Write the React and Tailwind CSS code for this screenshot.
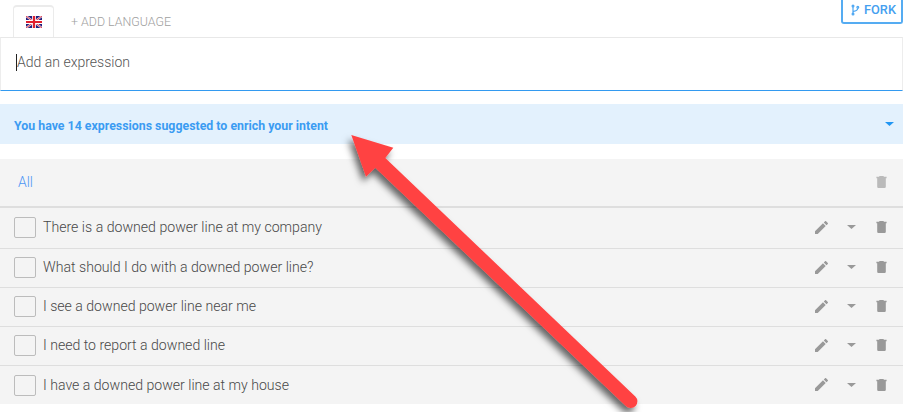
import React from "react";

const expressions = [
  { text: "There is a downed power line at my company", row: "h-[41px]", shift: "pb-px", width: 279 },
  { text: "What should I do with a downed power line?", row: "h-[39px]", shift: "pb-[2px]", width: 270.5 },
  { text: "I see a downed power line near me", row: "h-[39px]", shift: "pb-px", width: 213 },
  { text: "I need to report a downed line", row: "h-[39px]", shift: "pb-[2px]", width: 182 },
  { text: "I have a downed power line at my house", row: "h-[38px]", shift: "pb-px", width: 246 },
];

// Real text set to a fixed advance width.
function Label({ children, width, size = 14, weight = 300, color }) {
  return (
    <svg width={width + 4} height="20" className="block shrink-0 overflow-visible">
      <text x="0" y="15" textLength={width} lengthAdjust="spacingAndGlyphs" fontSize={size} fontWeight={weight} fill={color} fontFamily="Roboto, sans-serif">
        {children}
      </text>
    </svg>
  );
}

function Flag() {
  return (
    <svg width="16" height="12" viewBox="0 0 16 12" className="block">
      <rect width="16" height="12" fill="#20207f" />
      <path d="M0 0 16 12M16 0 0 12" stroke="#f4e0ea" strokeWidth="2" />
      <path d="M0 0 16 12M16 0 0 12" stroke="#d92b3c" strokeWidth="0.9" />
      <path d="M8 0V12M0 6H16" stroke="#fff" strokeWidth="3.8" />
      <path d="M8 0V12M0 6H16" stroke="#e01f2d" strokeWidth="2.2" />
    </svg>
  );
}

function Trash({ color = "#999" }) {
  return (
    <svg width="11" height="12" viewBox="0 0 11 12" className="block" fill={color}>
      <path d="M3.6 0H7.4L8 0.8H10.6V2.3H0.4V0.8H3zM1.2 2.3H9.8V10.8Q9.8 12 8.6 12H2.4Q1.2 12 1.2 10.8z" />
    </svg>
  );
}

function Pencil() {
  return (
    <svg width="13" height="13" viewBox="3 3 18 18" className="block" fill="#999">
      <path d="M3 17.25V21h3.75L17.81 9.94l-3.75-3.75L3 17.25zM20.71 7.04c.39-.39.39-1.02 0-1.41l-2.34-2.34c-.39-.39-1.02-.39-1.41 0l-1.83 1.83 3.75 3.75 1.83-1.83z" />
    </svg>
  );
}

function Caret({ color = "#999" }) {
  return (
    <svg width="9" height="4" viewBox="0 0 9 4" className="block">
      <path d="M0 0H9L4.5 4z" fill={color} />
    </svg>
  );
}

function Arrow() {
  return (
    <svg width="904" height="412" className="pointer-events-none absolute left-0 top-0">
      <defs>
        <filter id="shadow" x="-20%" y="-20%" width="140%" height="140%">
          <feDropShadow dx="-3" dy="5" stdDeviation="3.5" floodColor="#000" floodOpacity="0.6" />
        </filter>
      </defs>
      <path
        filter="url(#shadow)"
        fill="#ff4343"
        d="M351.3 135 393.3 147.7 385.3 158 635.3 396.4A6.7 6.7 0 0 1 626.1 406.2L375.3 167.7 366 176.7z"
      />
    </svg>
  );
}

export default function App() {
  return (
    <div className="relative h-[412px] w-[904px] overflow-hidden bg-white font-[Roboto,sans-serif]">
      <header className="flex h-[37px] items-start">
        <div className="ml-[13px] mt-[5px] flex h-[32px] w-[41px] justify-center rounded-t-sm border-x-[1.5px] border-t-2 border-[#ebebeb] pt-[9px]">
          <Flag />
        </div>
        <div className="ml-[17px] mt-[11px]">
          <Label width={100} size={12} weight={300} color="#a0a0a0">+ ADD LANGUAGE</Label>
        </div>
        <div className="ml-auto mr-px flex h-[24px] w-[62px] rounded-b-[3px] border-2 border-t-0 border-[#55acf2] pl-[8px]">
          <svg width="9" height="12" viewBox="0 0 9 12" className="mt-[4px] shrink-0" fill="none" stroke="#4ba6f2" strokeWidth="1.2">
            <circle cx="2" cy="2" r="0.9" />
            <circle cx="2" cy="10" r="0.9" />
            <circle cx="6.8" cy="3.2" r="0.9" />
            <path d="M2 3v6M6.8 4.2Q6.5 6.8 2.3 7.4" />
          </svg>
          <div className="-mt-px ml-[4px]">
            <Label width={32} size={12.5} weight={500} color="#459ff0">FORK</Label>
          </div>
        </div>
      </header>

      <section className="flex h-[54px] w-[903px] items-start border-x border-t border-b-[1.5px] border-x-[#ededed] border-t-[#e8e8e8] border-b-[#339af0] pl-[15px] pt-[14px]">
        <div className="mt-[2px] h-[17px] w-px bg-[#222]" />
        <Label width={113} color="#555">Add an expression</Label>
      </section>

      <section className="mt-[13px] flex h-[40px] w-[903px] items-center justify-between bg-[#e3f1fd] pl-[14px] pr-[9px]">
        <div className="pt-px">
          <Label width={314} size={12} weight={700} color="#3b9cf2">You have 14 expressions suggested to enrich your intent</Label>
        </div>
        <Caret color="#2196f3" />
      </section>

      <main className="mt-[15px] h-[245px] w-[903px] bg-[#f4f4f4]">
        <div className="flex h-[49px] items-center justify-between border-b-2 border-[#dedede] pb-[2px] pl-[18px] pr-[16px]">
          <Label width={15} color="#4f97f5">All</Label>
          <Trash color="#bababa" />
        </div>
        {expressions.map((item) => (
          <div
            key={item.text}
            className={"flex items-center border-b border-[#dedede] pb-px pl-[14px] pr-[16px] last:border-b-0 last:pb-0 " + item.row}
          >
            <div className="h-[21px] w-[22px] rounded-[2px] border-[1.5px] border-[#bcbcbc]" />
            <div className={"ml-[7px] " + item.shift}>
              <Label width={item.width} color="#484848">{item.text}</Label>
            </div>
            <div className="ml-auto flex items-center pb-px">
              <Pencil />
              <div className="ml-[19px]"><Caret /></div>
              <div className="ml-[20px]"><Trash /></div>
            </div>
          </div>
        ))}
      </main>
      <Arrow />
    </div>
  );
}
